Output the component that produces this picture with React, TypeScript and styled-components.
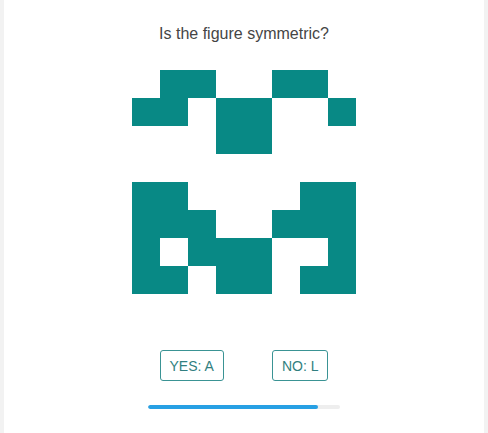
import React from 'react'
import styled, { createGlobalStyle } from 'styled-components'

const GlobalStyle = createGlobalStyle`
  html, body {
    margin: 0;
    padding: 0;
    background: #f2f2f2;
    font-family: "Liberation Sans", Arial, sans-serif;
  }
`

const TOP_FIGURE = [
  [0, 1, 1, 0, 0, 1, 1, 0],
  [1, 1, 0, 1, 1, 0, 0, 1],
  [0, 0, 0, 1, 1, 0, 0, 0],
]

const BOTTOM_FIGURE = [
  [1, 1, 0, 0, 0, 0, 1, 1],
  [1, 1, 1, 0, 0, 1, 1, 1],
  [1, 0, 1, 1, 1, 0, 0, 1],
  [1, 1, 0, 1, 1, 0, 1, 1],
]

const PROGRESS = 0.885

const Figure: React.FC<{ cells: number[][] }> = ({ cells }) => (
  <StyledFigure>
    {cells.flat().map((on, i) => (
      <Cell key={i} $on={on === 1} />
    ))}
  </StyledFigure>
)

const App: React.FC = () => {
  return (
    <>
      <GlobalStyle />
      <StyledCard>
        <StyledTitle>Is the figure symmetric?</StyledTitle>
        <StyledFigures>
          <Figure cells={TOP_FIGURE} />
          <Figure cells={BOTTOM_FIGURE} />
        </StyledFigures>
        <StyledAnswers>
          <AnswerButton>YES: A</AnswerButton>
          <AnswerButton>NO: L</AnswerButton>
        </StyledAnswers>
        <StyledTrack>
          <StyledFill style={{ width: `${PROGRESS * 100}%` }} />
        </StyledTrack>
      </StyledCard>
    </>
  )
}

const StyledCard = styled.div`
  margin: 0 4px;
  min-height: 100vh;
  background: #fff;
  padding-top: 24px;
  box-sizing: border-box;
  display: flex;
  flex-direction: column;
  align-items: center;
`

const StyledTitle = styled.div`
  font-size: 16px;
  line-height: 20px;
  color: #454545;
`

const StyledFigures = styled.div`
  margin-top: 26px;
  display: flex;
  flex-direction: column;
  gap: 28px;
`

const StyledFigure = styled.div`
  display: grid;
  grid-template-columns: repeat(8, 28px);
  grid-auto-rows: 28px;
`

const Cell = styled.div<{ $on: boolean }>`
  background: ${(p) => (p.$on ? '#088985' : 'transparent')};
`

const StyledAnswers = styled.div`
  margin-top: 56px;
  display: flex;
  gap: 48px;
`

const AnswerButton = styled.button`
  height: 31px;
  padding: 0 9px;
  background: #fff;
  border: 1px solid #3a9394;
  border-radius: 3px;
  color: #317f80;
  font-family: "Liberation Sans", Arial, sans-serif;
  font-size: 14px;
  cursor: pointer;
`

const StyledTrack = styled.div`
  margin-top: 24px;
  width: 192px;
  height: 4px;
  border-radius: 2px;
  background: #eeeeee;
  overflow: hidden;
`

const StyledFill = styled.div`
  height: 100%;
  border-radius: 2px;
  background: #27a0e4;
`

export default App
